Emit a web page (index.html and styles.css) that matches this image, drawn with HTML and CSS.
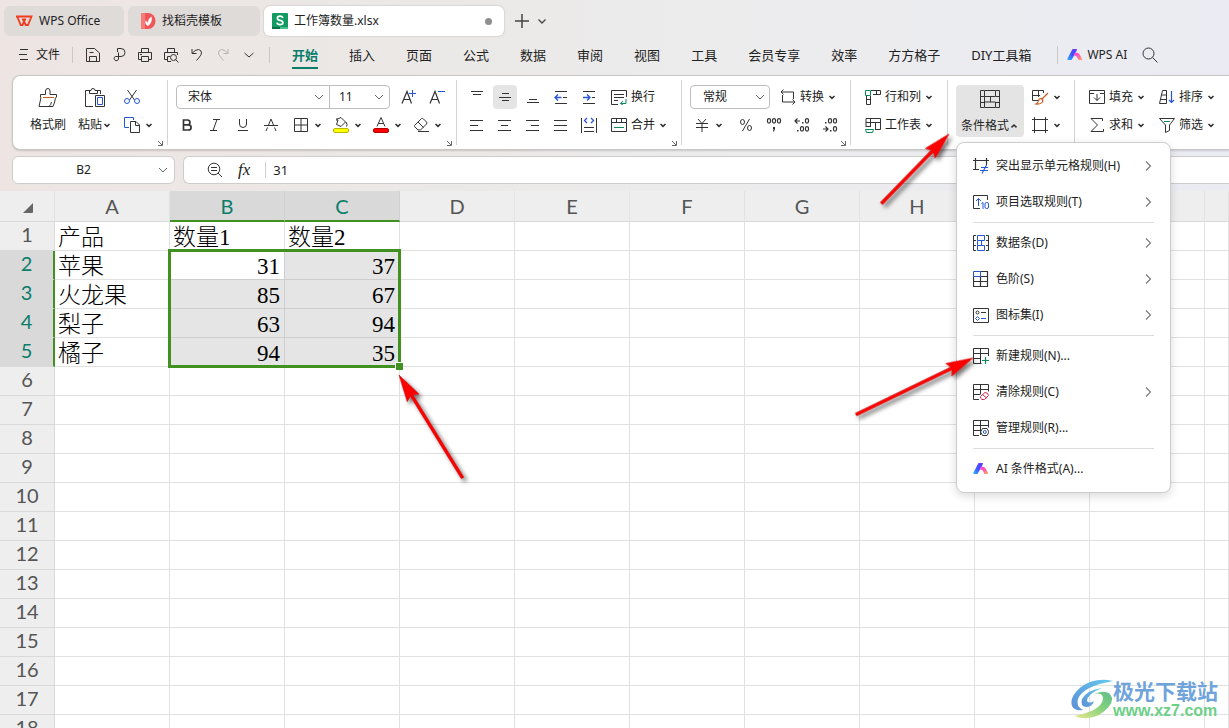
FILE: index.html
```html
<!DOCTYPE html>
<html lang="zh-CN">
<head>
<meta charset="utf-8">
<title>工作簿数量.xlsx - WPS Office</title>
<link rel="stylesheet" href="styles.css">
</head>
<body>
<svg class="defs" aria-hidden="true">
  <defs>
    <linearGradient id="aiBlue" x1="0" y1="1" x2="1" y2="0"><stop offset="0" stop-color="#2ab8ff"/><stop offset=".5" stop-color="#4050ff"/><stop offset="1" stop-color="#6a3cf5"/></linearGradient>
    <linearGradient id="aiPink" x1="0" y1="0" x2="1" y2="1"><stop offset="0" stop-color="#f03cf0"/><stop offset=".5" stop-color="#ff5fa8"/><stop offset="1" stop-color="#ffb060"/></linearGradient>
    <linearGradient id="swirlTop" x1="0" y1="1" x2="1" y2="0"><stop offset="0" stop-color="#5e8fd6"/><stop offset="1" stop-color="#62c8ee"/></linearGradient>
    <linearGradient id="swirlLow" x1="0" y1="1" x2="1" y2="0"><stop offset="0" stop-color="#e9e78a"/><stop offset=".6" stop-color="#7fcf7c"/><stop offset="1" stop-color="#5fbf8c"/></linearGradient>
    <filter id="shade" x="-20%" y="-20%" width="150%" height="150%"><feDropShadow dx="3" dy="3" stdDeviation="2" flood-color="#000" flood-opacity=".55"/></filter>
  </defs>
  <symbol id="caret" viewBox="0 0 10 10"><path d="M2.500 4 5 6.300 7.500 4" stroke="#333" stroke-width="1.600" fill="none"/></symbol>
  <symbol id="caret-up" viewBox="0 0 10 10"><path d="M2.500 6.300 5 4 7.500 6.300" stroke="#333" stroke-width="1.600" fill="none"/></symbol>
  <symbol id="chev" viewBox="0 0 10 10"><path d="M1 3 5 7 9 3" stroke="#666" stroke-width="1" fill="none"/></symbol>
  <symbol id="next" viewBox="0 0 10 10"><path d="M2 .500 6.500 5 2 9.500" stroke="#777" stroke-width="1.100" fill="none"/></symbol>
  <symbol id="launch" viewBox="0 0 8 8"><path d="M1 2 5 6M5.500 2V6.500H1" stroke="#666" stroke-width="1" fill="none"/></symbol>
  <symbol id="ai" viewBox="0 0 16 14"><path d="M5.500 1H9.500Q10.500 1 9.500 3L4.500 12H1Q0 12 .500 10.500Z" fill="url(#aiBlue)"/><path d="M7 5.500Q11 3.500 13 7L15.500 12H11.500L10 9Q9 7 7 7.500Z" fill="url(#aiPink)"/></symbol>
</svg>

<header class="titlebar">
  <button class="doc-tab home"><svg width="17" height="12" viewBox="0 0 17 12"><path d="M0 1.500H15.500L12 10H9.800L6.500 3.500M1.200 1.500 4.700 10H6.500L9.500 3.500" fill="none" stroke="#f43b1f" stroke-width="1.800"/></svg>WPS Office</button>
  <button class="doc-tab store"><svg width="16" height="16" viewBox="0 0 16 16"><path d="M2 0H8A7.500 8 0 0 1 8 16H2Z" fill="#f0555a"/><path d="M1 0H5V16H1Z" fill="#f77b78"/><path d="M8 13Q4.500 11 5.500 7.500Q8 8.500 8 10.500Q7.500 6 11.500 3.500Q13 9 8 13Z" fill="#fff"/></svg>找稻壳模板</button>
  <button class="doc-tab active"><svg width="16" height="16" viewBox="0 0 16 16"><rect width="16" height="16" rx="1" fill="#119b63"/><path d="M0 14H8V16H0Z" fill="#0a7048"/><path d="M8 14H16V16H8Z" fill="#42c38b"/><path d="M10.800 5Q10.300 3.200 8 3.200Q5.400 3.200 5.400 5.200Q5.400 6.900 8 7.400Q10.900 7.900 10.900 9.800Q10.800 11.700 8.100 11.700Q5.400 11.700 5 9.600" fill="none" stroke="#fff" stroke-width="1.700"/></svg><span class="doc-name">工作簿数量.xlsx</span><i class="dot"></i></button>
  <button class="icon-btn" aria-label="新建"><svg width="14" height="14" viewBox="0 0 14 14"><path d="M7 0V14M0 7H14" stroke="#444" stroke-width="1.500"/></svg></button>
  <button class="icon-btn slim" aria-label="标签列表"><svg width="10" height="10" viewBox="0 0 10 10"><path d="M1.500 3.500 5 7 8.500 3.500" stroke="#444" stroke-width="1.300" fill="none"/></svg></button>
</header>

<nav class="menubar">
  <button class="file-btn"><svg width="10" height="12" viewBox="0 0 10 12"><path d="M1 .500H9M0 5.500H8M1 10.500H9" stroke="#333"/></svg>文件</button>
  <div class="quick">
    <button class="q" aria-label="保存"><svg width="16" height="16" viewBox="0 0 16 16"><path d="M1.500 1.500H9.500L14.500 6V14.500H1.500ZM4.500 14V9.500H11.500V14M4.500 5.500H8.500" fill="none" stroke="#333"/></svg></button>
    <button class="q" aria-label="输出为PDF"><svg width="16" height="16" viewBox="0 0 16 16"><path d="M6.500 5V1.500H10A3.500 3.500 0 0 1 10 9.500H4.500A2.200 2.200 0 1 0 7.500 12V5.500" fill="none" stroke="#333"/></svg></button>
    <button class="q" aria-label="打印"><svg width="16" height="16" viewBox="0 0 16 16"><path d="M4.500 5V1.500H11.500V5M4 12.500H1.500V5.500H14.500V12.500H12M4.500 9.500H11.500V14.500H4.500ZM3 7.500H5" fill="none" stroke="#333"/></svg></button>
    <button class="q" aria-label="打印预览"><svg width="16" height="16" viewBox="0 0 16 16"><path d="M4.500 5V1.500H11.500V5M4 12.500H1.500V5.500H14.500V8M4.500 14.500V9.500H7M4.500 14.500H8M12.500 12.500 15.500 15.500" fill="none" stroke="#333"/><circle cx="10.500" cy="10.500" r="3" fill="none" stroke="#333"/></svg></button>
    <button class="q" aria-label="撤销"><svg width="16" height="16" viewBox="0 0 16 16"><path d="M3 2V6.500H7.500M3 6.500Q6 2.500 9.500 2.500Q12.500 3 12.500 6Q12.500 8 7.500 13.500" fill="none" stroke="#333"/></svg></button>
    <button class="q" aria-label="恢复"><svg width="16" height="16" viewBox="0 0 16 16"><path d="M13 2V6.500H8.500M13 6.500Q10 2.500 6.500 2.500Q3.500 3 3.500 6Q3.500 8 8.500 13.500" fill="none" stroke="#b5b3b3"/></svg></button>
    <button class="q" aria-label="更多"><svg width="12" height="12" viewBox="0 0 12 12"><path d="M1.500 4 6 8 10.500 4" stroke="#333" fill="none"/></svg></button>
  </div>
  <div class="tabs">
    <button class="tab on">开始</button><button class="tab">插入</button><button class="tab">页面</button><button class="tab">公式</button><button class="tab">数据</button><button class="tab">审阅</button><button class="tab">视图</button><button class="tab">工具</button><button class="tab">会员专享</button><button class="tab">效率</button><button class="tab">方方格子</button><button class="tab">DIY工具箱</button>
  </div>
  <div class="extras">
    <button class="ai-btn"><svg width="16" height="14"><use href="#ai"/></svg>WPS AI</button>
    <button class="search" aria-label="搜索"><svg width="16" height="16" viewBox="0 0 16 16"><circle cx="6.500" cy="6.500" r="5.500" fill="none" stroke="#333"/><path d="M10.500 10.500 15.500 15.500" stroke="#333"/></svg></button>
  </div>
</nav>

<section class="ribbon">
  <div class="group clip">
    <button class="big"><svg width="20" height="20" viewBox="0 0 20 20"><path d="M2.500 9.500V6.500H7.500V3Q7.500 .500 10 .500Q12 .500 12 3V6.500H18.500V9.500M3 9.500 1 18.500H15Q17 14 17.500 9.500M11 18.500Q13 17 13.500 14" fill="none" stroke="#333"/><path d="M5 9.500H16" stroke="#c8591c"/></svg><span>格式刷</span></button>
    <button class="big"><svg width="20" height="20" viewBox="0 0 20 20"><path d="M6 2.500H.500V18.500H8M12 2.500H15.500V6M4.500 5.500V2.500H6Q6 .500 8 .500T10 2.500H12.500V5.500Z" fill="none" stroke="#333"/><path d="M10.500 18.500V7.500H19.500V18.500Z" fill="none" stroke="#333"/><path d="M12.500 9.500H17.500V16.500H12.500Z" fill="none" stroke="#2456d6"/></svg><span>粘贴<svg width="10" height="10"><use href="#caret"/></svg></span></button>
    <div class="stack">
      <button class="cell" aria-label="剪切"><svg width="16" height="16" viewBox="0 0 16 16"><path d="M3.500 1 10.500 11M12.500 1 5.500 11" stroke="#333"/><circle cx="3" cy="12" r="2.500" fill="none" stroke="#2456d6"/><circle cx="13" cy="12" r="2.500" fill="none" stroke="#2456d6"/></svg></button>
      <button class="split" aria-label="复制"><svg width="18" height="18" viewBox="0 0 18 18"><path d="M6 11.500H1.500V1.500H10.500V4" fill="none" stroke="#2456d6"/><path d="M7.500 5.500H13L16.500 9V16.500H7.500ZM12.500 5.500V9.500H16.500" fill="none" stroke="#333"/></svg><svg width="10" height="10"><use href="#caret"/></svg></button>
    </div>
    <svg class="launcher" width="8" height="8"><use href="#launch"/></svg>
  </div>

  <div class="group font">
    <div class="line">
      <div class="combo">
        <label class="pick face"><select aria-label="字体"><option>宋体</option></select><svg width="10" height="10"><use href="#chev"/></svg></label>
        <label class="pick size"><select aria-label="字号"><option>11</option></select><svg width="10" height="10"><use href="#chev"/></svg></label>
      </div>
      <button class="cell" aria-label="增大字号"><svg width="16" height="16" viewBox="0 0 16 16"><path d="M1 14.500 6 2.500 10.500 14.500M3 10.500H9" fill="none" stroke="#333" stroke-width="1.200"/><path d="M11.500 1V8M8 4.500H15" stroke="#2456d6"/></svg></button>
      <button class="cell" aria-label="减小字号"><svg width="16" height="16" viewBox="0 0 16 16"><path d="M1 14.500 6 2.500 10.500 14.500M3 10.500H9" fill="none" stroke="#333" stroke-width="1.200"/><path d="M9 2.500H16" stroke="#2456d6"/></svg></button>
    </div>
    <div class="line">
      <button class="cell" aria-label="加粗"><svg width="12" height="12" viewBox="0 0 12 12"><path d="M2.500 1H6.500A2.300 2.300 0 0 1 6.500 5.800H2.500ZM2.500 5.800H7.500A2.500 2.500 0 0 1 7.500 11H2.500Z" fill="none" stroke="#333" stroke-width="1.700"/></svg></button>
      <button class="cell" aria-label="倾斜"><svg width="12" height="12" viewBox="0 0 12 12"><path d="M4 .500H11M1 11.500H8M8 .500 4 11.500" fill="none" stroke="#333"/></svg></button>
      <button class="cell" aria-label="下划线"><svg width="12" height="12" viewBox="0 0 12 12"><path d="M2.500 0V5Q2.500 8.500 6 8.500T9.500 5V0M1 11.500H11" fill="none" stroke="#333"/></svg></button>
      <button class="cell" aria-label="删除线"><svg width="14" height="12" viewBox="0 0 14 12"><path d="M4.500 6 7 0 9.500 6M0 6.500H14M3.500 8.500 2 12M10.500 8.500 12 12" fill="none" stroke="#333"/></svg></button>
      <div class="line splits">
        <button class="split" aria-label="边框"><svg width="14" height="14" viewBox="0 0 14 14"><path d="M.500 .500H13.500V13.500H.500ZM7 0V14M0 7H14" fill="none" stroke="#333"/></svg><svg width="10" height="10"><use href="#caret"/></svg></button>
        <button class="split" aria-label="填充颜色"><svg width="16" height="18" viewBox="0 0 16 18"><path d="M3.500 3.500 8 1.500 12.500 6 8 10.500 3.500 8.500 5 4M4 2V5M13 6Q15 9 13.500 10.500" fill="none" stroke="#333"/><rect x=".500" y="12.500" width="15" height="4" rx="1.500" fill="#ff0" stroke="#b9b900"/></svg><svg width="10" height="10"><use href="#caret"/></svg></button>
        <button class="split" aria-label="字体颜色"><svg width="16" height="18" viewBox="0 0 16 18"><path d="M4 10.500 8 1.500 12 10.500M5.500 7.500H10.500" fill="none" stroke="#333"/><rect x=".500" y="12.500" width="15" height="4" rx="1.500" fill="#f00" stroke="#b80000"/></svg><svg width="10" height="10"><use href="#caret"/></svg></button>
        <button class="split" aria-label="清除"><svg width="16" height="16" viewBox="0 0 16 16"><path d="M1.500 8.500 8.500 1.500Q9.500 1 10.500 2L13.500 5Q14.500 6 13.500 7L7.500 13H5L1.500 9.500ZM5 5 10.500 10.500M5 14.500H16" fill="none" stroke="#333"/></svg><svg width="10" height="10"><use href="#caret"/></svg></button>
      </div>
    </div>
    <svg class="launcher" width="8" height="8"><use href="#launch"/></svg>
  </div>

  <div class="group align">
    <div class="line">
      <button class="cell" aria-label="顶端对齐"><svg width="14" height="14" viewBox="0 0 14 14"><path d="M1 1.500H13M3 4.500H11" stroke="#333"/></svg></button>
      <button class="cell pressed" aria-label="垂直居中"><svg width="14" height="14" viewBox="0 0 14 14"><path d="M4 3.500H11M1 7.500H13M4 10.500H11" stroke="#333"/></svg></button>
      <button class="cell" aria-label="底端对齐"><svg width="14" height="14" viewBox="0 0 14 14"><path d="M3 9.500H11M1 12.500H13" stroke="#333"/></svg></button>
      <button class="cell" aria-label="减少缩进"><svg width="14" height="14" viewBox="0 0 14 14"><path d="M1 1.500H13M1 13.500H13M9 7.500H13" stroke="#333"/><path d="M7.500 7.500H1M4 4.500 1 7.500 4 10.500" fill="none" stroke="#2456d6" stroke-width="1.300"/></svg></button>
      <button class="cell" aria-label="增加缩进"><svg width="14" height="14" viewBox="0 0 14 14"><path d="M1 1.500H13M1 13.500H13M10 7.500H13" stroke="#333"/><path d="M1 7.500H8M5 4.500 8 7.500 5 10.500" fill="none" stroke="#2456d6" stroke-width="1.300"/></svg></button>
      <button class="label-btn"><svg width="16" height="16" viewBox="0 0 16 16"><path d="M7 15.500H.500V1.500H15.500V8M3 5.500H13M3 8.500H13M3 11.500H7" fill="none" stroke="#333"/><path d="M15 10V14.500H9.500M12 12 9.500 14.500 12 16" fill="none" stroke="#0b8a5a"/></svg>换行</button>
    </div>
    <div class="line">
      <button class="cell" aria-label="左对齐"><svg width="14" height="14" viewBox="0 0 14 14"><path d="M0 2.500H13M0 7.500H8M0 12.500H13" stroke="#333"/></svg></button>
      <button class="cell" aria-label="居中"><svg width="14" height="14" viewBox="0 0 14 14"><path d="M0 2.500H13M3 7.500H10M0 12.500H13" stroke="#333"/></svg></button>
      <button class="cell" aria-label="右对齐"><svg width="14" height="14" viewBox="0 0 14 14"><path d="M0 2.500H13M5 7.500H13M0 12.500H13" stroke="#333"/></svg></button>
      <button class="cell" aria-label="两端对齐"><svg width="14" height="14" viewBox="0 0 14 14"><path d="M0 2.500H13M0 7.500H13M0 12.500H13" stroke="#333"/></svg></button>
      <button class="cell" aria-label="分散对齐"><svg width="16" height="16" viewBox="0 0 16 16"><path d="M.500 1V16M15.500 1V16M3 10.500H13M3 14.500H13" stroke="#333"/><path d="M6 1 3.500 3.500 6 6M10 1 12.500 3.500 10 6" fill="none" stroke="#2456d6" stroke-width="1.300"/></svg></button>
      <button class="label-btn"><svg width="16" height="16" viewBox="0 0 16 16"><path d="M.500 1.500H15.500V14.500H.500ZM.500 5.500H15.500M5.500 1.500V5.500M10.500 1.500V5.500" fill="none" stroke="#333"/><path d="M3 10.500H13" stroke="#0b8a5a"/></svg>合并<svg width="10" height="10"><use href="#caret"/></svg></button>
    </div>
    <svg class="launcher" width="8" height="8"><use href="#launch"/></svg>
  </div>

  <div class="group number">
    <div class="line">
      <label class="pick format"><select aria-label="数字格式"><option>常规</option></select><svg width="10" height="10"><use href="#chev"/></svg></label>
      <button class="label-btn"><svg width="16" height="16" viewBox="0 0 16 16"><path d="M3.500 .500 1 3 3.500 5.500M1 3H13.500V10M2.500 6V13H15M12.500 10.500 15 13 12.500 15.500" fill="none" stroke="#333"/></svg>转换<svg width="10" height="10"><use href="#caret"/></svg></button>
    </div>
    <div class="line low">
      <button class="split" aria-label="货币"><svg width="14" height="14" viewBox="0 0 14 14"><path d="M3 1 7 5.500 11 1M1 5.500H13M1 9.500H13M7 5.500V14" fill="none" stroke="#333"/></svg><svg width="10" height="10"><use href="#caret"/></svg></button>
      <button class="cell" aria-label="百分比"><svg width="14" height="14" viewBox="0 0 14 14"><path d="M10.500 1 3.500 13" stroke="#333"/><ellipse cx="3.500" cy="4" rx="2" ry="2.500" fill="none" stroke="#333"/><ellipse cx="10.500" cy="10" rx="2" ry="2.500" fill="none" stroke="#333"/></svg></button>
      <button class="cell" aria-label="千位分隔"><svg width="16" height="16" viewBox="0 0 16 16"><g fill="none" stroke="#333" stroke-width="1.200"><rect x="1.500" y="1.600" width="3" height="4.500" rx="1.500"/><rect x="6.500" y="1.600" width="3" height="4.500" rx="1.500"/><rect x="11.500" y="1.600" width="3" height="4.500" rx="1.500"/></g><path d="M7 10H9V12L8 14.500H7L7.500 12H7Z" fill="#333"/></svg></button>
      <button class="cell" aria-label="增加小数位数"><svg width="16" height="16" viewBox="0 0 16 16"><g fill="none" stroke="#333" stroke-width="1.200"><path d="M6 4H1.500M3.500 1.500 1 4 3.500 6.500"/><rect x="11.500" y="1.600" width="3" height="4.500" rx="1.500"/><rect x="6.500" y="9.600" width="3" height="4.500" rx="1.500"/><rect x="11.500" y="9.600" width="3" height="4.500" rx="1.500"/></g><path d="M8 5H9.500V6.500H8ZM3 13H4.500V14.500H3Z" fill="#333"/></svg></button>
      <button class="cell" aria-label="减少小数位数"><svg width="16" height="16" viewBox="0 0 16 16"><g fill="none" stroke="#333" stroke-width="1.200"><path d="M1 12H6M3.500 9.500 6 12 3.500 14.500"/><rect x="6.500" y="1.600" width="3" height="4.500" rx="1.500"/><rect x="11.500" y="1.600" width="3" height="4.500" rx="1.500"/><rect x="11.500" y="9.600" width="3" height="4.500" rx="1.500"/></g><path d="M3 5H4.500V6.500H3ZM8 13H9.500V14.500H8Z" fill="#333"/></svg></button>
    </div>
    <svg class="launcher" width="8" height="8"><use href="#launch"/></svg>
  </div>

  <div class="group cells">
    <button class="label-btn"><svg width="16" height="16" viewBox="0 0 16 16"><path d="M6 1.500H15.500V5.500H8M11.500 1.500V5.500M1.500 7V15.500H5.500V7M1.500 10.500H5.500" fill="none" stroke="#333"/><path d="M.500 1.500H5.500V6.500H.500Z" fill="none" stroke="#0b8a5a"/></svg>行和列<svg width="10" height="10"><use href="#caret"/></svg></button>
    <button class="label-btn"><svg width="16" height="16" viewBox="0 0 16 16"><path d="M1 10V1.500H15.500V12.500H10M1 5.500H15.500M5.500 1.500V10M1 9.500H6M10.500 5.500V12" fill="none" stroke="#333"/><path d="M.500 12.500H8.500L7.500 15.500H1.500Z" fill="none" stroke="#0b8a5a"/></svg>工作表<svg width="10" height="10"><use href="#caret"/></svg></button>
  </div>

  <div class="group style">
    <div class="cond-wrap">
      <button class="cond" aria-expanded="true"><svg width="20" height="20" viewBox="0 0 20 20"><path d="M4 1.500H.500V18.500H4M16 1.500H19.500V18.500H16M.500 7.500H4M.500 13.500H4M19.500 7.500H16M19.500 13.500H16M4.500 1.500H15.500V7.500H4.500ZM4.500 13H15.500V18.500H4.500ZM4.500 7.500V13M10.500 7.500V13" fill="none" stroke="#333"/></svg><span>条件格式<svg width="10" height="10"><use href="#caret-up"/></svg></span></button>
      <ul class="menu">
        <li><button><svg width="16" height="16" viewBox="0 0 16 16"><path d="M2.500 0V12M13.500 0V7M0 2.500H16M0 11.500H6" stroke="#333" stroke-width="1.200"/><path d="M8 9.500H15M7 12.500H15M13.500 7 9 15.500" stroke="#2456d6" stroke-width="1.100"/></svg><span>突出显示单元格规则(H)</span><svg width="10" height="10"><use href="#next"/></svg></button></li>
        <li><button><svg width="16" height="16" viewBox="0 0 16 16"><path d="M7 14.500H.500V1.500H14.500V6" fill="none" stroke="#333"/><path d="M5.500 12V4.500M3 7 5.500 4.500 8 7M8.500 9.500 10 8.500V15" fill="none" stroke="#2456d6"/><rect x="12" y="8.500" width="3.500" height="6" rx="1.500" fill="none" stroke="#2456d6"/></svg><span>项目选取规则(T)</span><svg width="10" height="10"><use href="#next"/></svg></button></li>
        <li class="rule"></li>
        <li><button><svg width="16" height="16" viewBox="0 0 16 16"><path d="M3 .500H.500V15.500H3M13 .500H15.500V15.500H13M.500 5.500H3M.500 10.500H3M15.500 5.500H13M15.500 10.500H13" fill="none" stroke="#333"/><path d="M4.500 .500H11.500V5.500H4.500ZM4.500 10.500H11.500V15.500H4.500ZM4.500 5.500V10.500M8.500 5.500V10.500" fill="none" stroke="#2456d6"/></svg><span>数据条(D)</span><svg width="10" height="10"><use href="#next"/></svg></button></li>
        <li><button><svg width="16" height="16" viewBox="0 0 16 16"><path d="M7.500 .500H14.500V15.500H.500V5.500M.500 10.500H14.500M7.500 5.500H14.500M7.500 5.500V15.500" fill="none" stroke="#333" stroke-width="1.200"/><path d="M.500 .500H7.500V5.500H.500Z" fill="none" stroke="#2456d6"/></svg><span>色阶(S)</span><svg width="10" height="10"><use href="#next"/></svg></button></li>
        <li><button><svg width="16" height="16" viewBox="0 0 16 16"><path d="M.500 1.500H15.500V15.500H.500ZM8 5.500H13" fill="none" stroke="#333"/><circle cx="4.500" cy="5.500" r="1.500" fill="none" stroke="#333"/><path d="M8 11.500H13M4.500 9.500 6.500 11.500 4.500 13.500 2.500 11.500Z" fill="none" stroke="#2456d6"/></svg><span>图标集(I)</span><svg width="10" height="10"><use href="#next"/></svg></button></li>
        <li class="rule"></li>
        <li><button><svg width="16" height="16" viewBox="0 0 16 16"><path d="M8.500 15.500H.500V.500H15.500V7.500M.500 5.500H15.500M.500 10.500H8M7.500 .500V15.500M15.500 5.500V8" fill="none" stroke="#333"/><path d="M12.500 9V16M9 12.500H16" stroke="#0b8a5a" stroke-width="1.200"/></svg><span>新建规则(N)...</span></button></li>
        <li><button><svg width="16" height="16" viewBox="0 0 16 16"><path d="M6 15.500H.500V.500H15.500V7.500M.500 5.500H15.500M.500 10.500H7M7.500 .500V10.500" fill="none" stroke="#333"/><path d="M7.500 12.500 12 8.500Q15 8.500 15.500 11.500L11.500 15.500H9Q7 14.500 7.500 12.500ZM9.500 10.500 13.500 14" fill="none" stroke="#d0294f"/></svg><span>清除规则(C)</span><svg width="10" height="10"><use href="#next"/></svg></button></li>
        <li><button><svg width="16" height="16" viewBox="0 0 16 16"><path d="M6 15.500H.500V.500H15.500V7.500M.500 5.500H15.500M.500 10.500H7M7.500 .500V15" fill="none" stroke="#333"/><path d="M9.500 8.500H14L16 12 14 15.500H9.500L7.500 12Z" fill="#fff" stroke="#333"/><circle cx="11.800" cy="12" r="1.500" fill="none" stroke="#2456d6"/></svg><span>管理规则(R)...</span></button></li>
        <li class="rule"></li>
        <li><button><svg width="16" height="14"><use href="#ai"/></svg><span>AI 条件格式(A)...</span></button></li>
      </ul>
    </div>
    <div class="stack">
      <button class="split" aria-label="表格样式"><svg width="18" height="18" viewBox="0 0 18 18"><path d="M7 12.500H1.500V2.500H12.500V5M1.500 7.500H9M7.500 2.500V9" fill="none" stroke="#333"/><path d="M17 5 11 11M5 16Q7 15 7.500 12.500Q8 10.500 10 10.500Q12.500 11.500 11.500 14Q9.500 16.500 5 16Z" fill="none" stroke="#c8591c" stroke-width="1.200"/></svg><svg width="10" height="10"><use href="#caret"/></svg></button>
      <button class="split" aria-label="单元格样式"><svg width="18" height="18" viewBox="0 0 18 18"><path d="M3.500 1V17M14.500 1V17M1 3.500H17M1 14.500H17" stroke="#333"/></svg><svg width="10" height="10"><use href="#caret"/></svg></button>
    </div>
  </div>

  <div class="group edit">
    <button class="label-btn"><svg width="16" height="16" viewBox="0 0 16 16"><path d="M5 4.500H.500V1.500H15.500V4.500H11M.500 4.500V14.500H15.500V4.500M8 5V11.500M5 8.500 8 11.500 11 8.500" fill="none" stroke="#333"/></svg>填充<svg width="10" height="10"><use href="#caret"/></svg></button>
    <button class="label-btn"><svg width="16" height="16" viewBox="0 0 16 16"><path d="M3.500 1.500H7.500V14.500H.500L3.500 1.500M2.500 6H7.500M1.500 10.500H7.500" fill="none" stroke="#333"/><path d="M12.500 2V13.500M10 11 12.500 13.500 15 11" fill="none" stroke="#2456d6" stroke-width="1.200"/></svg>排序<svg width="10" height="10"><use href="#caret"/></svg></button>
    <button class="label-btn"><svg width="16" height="16" viewBox="0 0 16 16"><path d="M13.500 4V1.500H2L8.500 8 2 14.500H14.500V12" fill="none" stroke="#333"/></svg>求和<svg width="10" height="10"><use href="#caret"/></svg></button>
    <button class="label-btn"><svg width="16" height="16" viewBox="0 0 16 16"><path d="M.500 1.500H15.500L10.500 8V13.500L6.500 15.500V8Z" fill="none" stroke="#333"/><path d="M5 4.500H11" stroke="#0b8a5a"/></svg>筛选<svg width="10" height="10"><use href="#caret"/></svg></button>
  </div>
</section>

<section class="formula">
  <label class="namebox"><input value="B2" aria-label="名称框"><svg width="10" height="10"><use href="#chev"/></svg></label>
  <div class="fxbar">
    <button aria-label="缩小查找"><svg width="16" height="16" viewBox="0 0 16 16"><circle cx="7" cy="7" r="5.800" fill="none" stroke="#333"/><path d="M11 11 15 15M4 5.500H10M4 8.500H10" stroke="#333"/></svg></button>
    <button class="fx" aria-label="插入函数">fx</button>
    <input value="31" aria-label="编辑栏">
  </div>
</section>

<main class="sheet">
  <table>
    <colgroup><col class="gutter"><col class="c"><col class="c"><col class="c"><col class="c"><col class="c"><col class="c"><col class="c"><col class="c"><col class="c"><col class="c"><col></colgroup>
    <thead><tr><th><svg width="10" height="10" viewBox="0 0 10 10"><path d="M10 0V9Q10 10 9 10H0Z" fill="#666"/></svg></th><th>A</th><th class="sel">B</th><th class="sel">C</th><th>D</th><th>E</th><th>F</th><th>G</th><th>H</th><th></th><th></th><th></th></tr></thead>
    <tbody>
      <tr><th>1</th><td>产品</td><td>数量1</td><td>数量2</td><td></td><td></td><td></td><td></td><td></td><td></td><td></td><td></td></tr>
      <tr class="sel"><th>2</th><td>苹果</td><td class="num cur">31<i class="range"></i></td><td class="num">37</td><td></td><td></td><td></td><td></td><td></td><td></td><td></td><td></td></tr>
      <tr class="sel"><th>3</th><td>火龙果</td><td class="num">85</td><td class="num">67</td><td></td><td></td><td></td><td></td><td></td><td></td><td></td><td></td></tr>
      <tr class="sel"><th>4</th><td>梨子</td><td class="num">63</td><td class="num">94</td><td></td><td></td><td></td><td></td><td></td><td></td><td></td><td></td></tr>
      <tr class="sel"><th>5</th><td>橘子</td><td class="num">94</td><td class="num">35</td><td></td><td></td><td></td><td></td><td></td><td></td><td></td><td></td></tr>
      <tr><th>6</th><td></td><td></td><td></td><td></td><td></td><td></td><td></td><td></td><td></td><td></td><td></td></tr>
      <tr><th>7</th><td></td><td></td><td></td><td></td><td></td><td></td><td></td><td></td><td></td><td></td><td></td></tr>
      <tr><th>8</th><td></td><td></td><td></td><td></td><td></td><td></td><td></td><td></td><td></td><td></td><td></td></tr>
      <tr><th>9</th><td></td><td></td><td></td><td></td><td></td><td></td><td></td><td></td><td></td><td></td><td></td></tr>
      <tr><th>10</th><td></td><td></td><td></td><td></td><td></td><td></td><td></td><td></td><td></td><td></td><td></td></tr>
      <tr><th>11</th><td></td><td></td><td></td><td></td><td></td><td></td><td></td><td></td><td></td><td></td><td></td></tr>
      <tr><th>12</th><td></td><td></td><td></td><td></td><td></td><td></td><td></td><td></td><td></td><td></td><td></td></tr>
      <tr><th>13</th><td></td><td></td><td></td><td></td><td></td><td></td><td></td><td></td><td></td><td></td><td></td></tr>
      <tr><th>14</th><td></td><td></td><td></td><td></td><td></td><td></td><td></td><td></td><td></td><td></td><td></td></tr>
      <tr><th>15</th><td></td><td></td><td></td><td></td><td></td><td></td><td></td><td></td><td></td><td></td><td></td></tr>
      <tr><th>16</th><td></td><td></td><td></td><td></td><td></td><td></td><td></td><td></td><td></td><td></td><td></td></tr>
      <tr><th>17</th><td></td><td></td><td></td><td></td><td></td><td></td><td></td><td></td><td></td><td></td><td></td></tr>
      <tr><th>18</th><td></td><td></td><td></td><td></td><td></td><td></td><td></td><td></td><td></td><td></td><td></td></tr>
    </tbody>
  </table>
</main>

<svg class="arrows" width="1229" height="728" viewBox="0 0 1229 728" aria-hidden="true">
  <g fill="#fe0000" stroke="#c01010" stroke-width=".500" filter="url(#shade)">
    <path transform="translate(399 375) rotate(58.300)" d="M0 0 27 -7 24 -1.500H121V1.500H24L27 7Z"/>
    <path transform="translate(949 134) rotate(134.200)" d="M0 0 27 -7 24 -1.500H97V1.500H24L27 7Z"/>
    <path transform="translate(973 358) rotate(154.200)" d="M0 0 27 -7 24 -1.500H130V1.500H24L27 7Z"/>
  </g>
</svg>

<aside class="watermark">
  <svg width="42" height="42" viewBox="0 0 42 42"><path d="M42 3Q24-1 10 9Q-2 19 1 28Q3 33 12 32Q5 29 7 21Q12 8 42 3Z" fill="url(#swirlTop)"/><path d="M31 10Q16 12 11 21Q9 28 15 29Q21 29 23 23Q18 26 16 23Q16 16 31 10Z" fill="url(#swirlTop)"/><path d="M23 16Q32 14 32 21Q30 33 3 38Q16 43 28 37Q42 28 41 20Q38 10 23 16Z" fill="url(#swirlLow)"/></svg>
  <div><strong>极光下载站</strong><span>www.xz7.com</span></div>
</aside>
</body>
</html>
```
FILE: styles.css
```css
* { box-sizing: border-box; }
body {
  margin: 0;
  height: 100vh;
  overflow: hidden;
  display: flex;
  flex-direction: column;
  position: relative;
  background: linear-gradient(90deg, #eee5e3 0, #ebe8e6 30%, #ececed 60%, #ebecf3 100%);
  color: #222;
  font: 12px/16px "Noto Sans", "Noto Sans CJK SC", sans-serif;
}
button, input, select {
  font: inherit;
  color: inherit;
  background: none;
  border: 0;
  padding: 0;
  margin: 0;
  outline: none;
}
button {
  display: flex;
  align-items: center;
  justify-content: center;
  white-space: nowrap;
}
svg { flex: none; display: block; }
.defs { position: absolute; width: 0; height: 0; }

.titlebar {
  display: flex;
  align-items: center;
  height: 40px;
  padding: 2px 4px 0;
  gap: 4px;
}
.doc-tab {
  height: 30px;
  border-radius: 6px;
  background: #dfdbd9;
  justify-content: flex-start;
  padding: 0 12px;
  gap: 6px;
}
.home { width: 120px; }
.store { width: 132px; }
.active {
  width: 240px;
  padding: 0 12px 0 8px;
  background: #fff;
  box-shadow: 0 0 2px #aaa;
}
.doc-name { flex: 1; text-align: left; }
.dot { width: 7px; height: 7px; border-radius: 50%; background: #8f8f8f; }
.icon-btn { width: 28px; height: 28px; }
.icon-btn.slim { width: 14px; margin-left: -5px; }

.menubar { display: flex; height: 35px; padding: 0 0 5px 19px; align-items: center; }
.file-btn { gap: 7px; padding-right: 12px; border-right: 1px solid #cbc8c7; }
.quick { display: flex; padding: 0 7px; border-right: 1px solid #cbc8c7; }
.q { width: 26px; height: 16px; }
.tabs { display: flex; gap: 31px; padding: 0 26px 0 22px; font-size: 13px; border-right: 1px solid #cbc8c7; height: 18px; align-items: center; }
.tab { height: 28px; border: solid transparent; border-width: 2px 0; }
.on { color: #0a7d6b; font-weight: 700; border-bottom-color: #0a7d6b; }
.extras { display: flex; gap: 15px; padding-left: 9px; }
.ai-btn { gap: 4px; }

.ribbon {
  display: flex;
  height: 75px;
  margin-left: 12px;
  padding: 4px 0;
  background: #fff;
  border: 1px solid #c9c7c6;
  border-right: 0;
  border-radius: 8px 0 0 8px;
  box-shadow: 0 1px 2px rgba(0, 0, 0, .15);
  flex: none;
}
.group {
  position: relative;
  border-right: 1px solid #d4d4d4;
  flex: none;
  padding-top: 3px;
}
.launcher { position: absolute; right: 2px; bottom: -2px; }
.line, .stack { display: flex; }
.line { align-items: center; height: 28px; }
.stack { flex-direction: column; align-items: flex-start; }
.cell { width: 28px; height: 28px; }
.pressed { background: #e5e5e5; border-radius: 4px; height: 24px; width: 24px; margin: 0 2px; }
.split { width: 40px; height: 28px; justify-content: flex-start; }
.split > svg:first-child { width: 20px; }
.split > svg:last-child { margin-left: 2px; }
.label-btn { height: 28px; gap: 4px; justify-content: flex-start; }
.label-btn svg:last-child:not(:first-child) { margin-left: -1px; }
.big, .cond { flex-direction: column; justify-content: flex-start; padding-top: 5px; gap: 10px; height: 56px; }
.big span, .cond span { display: flex; align-items: center; line-height: 14px; }

.clip { display: flex; width: 155px; padding-left: 14px; }
.clip .big { width: 42px; }
.clip .big:nth-child(2) { margin-left: 5px; }
.clip .stack { padding-left: 2px; }
.clip .split { padding-left: 4px; }

.font { width: 289px; padding-left: 5px; }
.splits { padding-left: 6px; }
.combo { display: flex; border: 1px solid #bdbdbd; border-radius: 4px; margin: 0 5px 0 3px; }
.pick { display: flex; align-items: center; height: 22px; }
.pick select { appearance: none; flex: 1; min-width: 0; height: 22px; }
.face { width: 152px; padding: 0 5px 0 11px; }
.size { width: 60px; padding: 0 5px 0 9px; border-left: 1px solid #bdbdbd; }
.format { width: 80px; height: 24px; padding: 0 4px 0 12px; border: 1px solid #bdbdbd; border-radius: 4px; }

.align { width: 225px; padding-left: 6px; }
.align .label-btn { padding-left: 8px; }

.number { width: 169px; padding-left: 8px; }
.number .label-btn { padding-left: 10px; }
.number .low { padding-left: 2px; }

.cells { width: 97px; padding-left: 14px; }

.style { display: flex; width: 127px; padding-left: 8px; }
.style .stack { padding-left: 6px; }
.cond-wrap { position: relative; }
.cond { width: 68px; height: 52px; margin-top: 2px; padding-top: 4px; background: #e4e4e4; border-radius: 4px; }
.edit { display: grid; grid-template-columns: 70px 70px; grid-auto-rows: 28px; border: 0; padding-left: 14px; }

.menu {
  position: absolute;
  z-index: 5;
  top: 59px;
  left: 0;
  width: 215px;
  margin: 0;
  padding: 5px 16px;
  list-style: none;
  background: #fff;
  border: 1px solid #ccc;
  border-radius: 8px;
  box-shadow: 0 3px 10px rgba(0, 0, 0, .15);
}
.menu button { width: 100%; height: 36px; gap: 7px; }
.menu span { flex: 1; text-align: left; }
.rule { height: 1px; background: #ddd; margin: 2px 0; }

.formula { display: flex; gap: 8px; margin: 6px 0 7px 12px; flex: none; }
.namebox, .fxbar { display: flex; align-items: center; height: 28px; background: #fff; border: 1px solid #cfcdcc; border-radius: 6px; }
.namebox { width: 163px; padding: 0 6px; }
.namebox input { flex: 1; min-width: 0; padding-right: 10px; text-align: center; }
.fxbar { flex: 1; border-right: 0; border-radius: 6px 0 0 6px; padding-left: 23px; gap: 15px; }
.fx { font: italic 17px/18px "Liberation Serif", serif; }
.fxbar input { flex: 1; min-width: 0; padding-left: 7px; border-left: 1px solid #ccc; height: 16px; font-size: 13px; }

.sheet { flex: 1; min-height: 0; overflow: hidden; background: #fff; }
table { width: 100%; table-layout: fixed; border-collapse: separate; border-spacing: 0; }
.gutter { width: 55px; }
.c { width: 115px; }
th {
  font: 20px/24px Lato, "Noto Sans", sans-serif;
  color: #555;
  background: #eee;
  padding: 0;
  height: 29px;
  vertical-align: top;
  border: solid #d9d9d9;
  border-width: 0 1px 1px 0;
}
thead th { height: 31px; border-right-color: #e2e2e2; padding-top: 3px; }
thead th svg { margin: 9px 0 0 23px; }
thead .sel { background: #d9d9d9; color: #0a7d6b; border-bottom: 2px solid #40911f; border-right-color: #d0d0d0; }
tbody .sel th { background: #d9d9d9; color: #0a7d6b; border-color: #d9d9d9; border-right: 2px solid #40911f; }
td {
  position: relative;
  height: 29px;
  padding: 4px 4px 0 3px;
  border: solid #e1e1e1;
  border-width: 0 1px 1px 0;
  color: #000;
  font: 300 23px/24px "Liberation Serif", "Noto Sans CJK SC", serif;
  white-space: nowrap;
}
.num { text-align: right; background: #e5e5e5; border-color: #cecece; }
.cur { background: #fff; }
.range {
  position: absolute;
  z-index: 2;
  left: -2px;
  top: -2px;
  width: 233px;
  height: 119px;
  border: 3px solid #40911f;
}
.range::after {
  content: "";
  position: absolute;
  right: -5px;
  bottom: -5px;
  width: 7px;
  height: 7px;
  background: #40911f;
  border: solid #fff;
  border-width: 1px 0 0 1px;
}

.arrows { position: absolute; left: 0; top: 0; z-index: 6; pointer-events: none; }
.watermark {
  position: absolute;
  right: 11px;
  bottom: 8px;
  display: flex;
  align-items: center;
}
.watermark div { display: flex; flex-direction: column; }
.watermark strong { font: 700 21px/24px "Noto Sans CJK SC", sans-serif; color: #6fa3dc; }
.watermark span { font: 700 16px/18px "Liberation Sans", sans-serif; color: #6ccf88; }
```
